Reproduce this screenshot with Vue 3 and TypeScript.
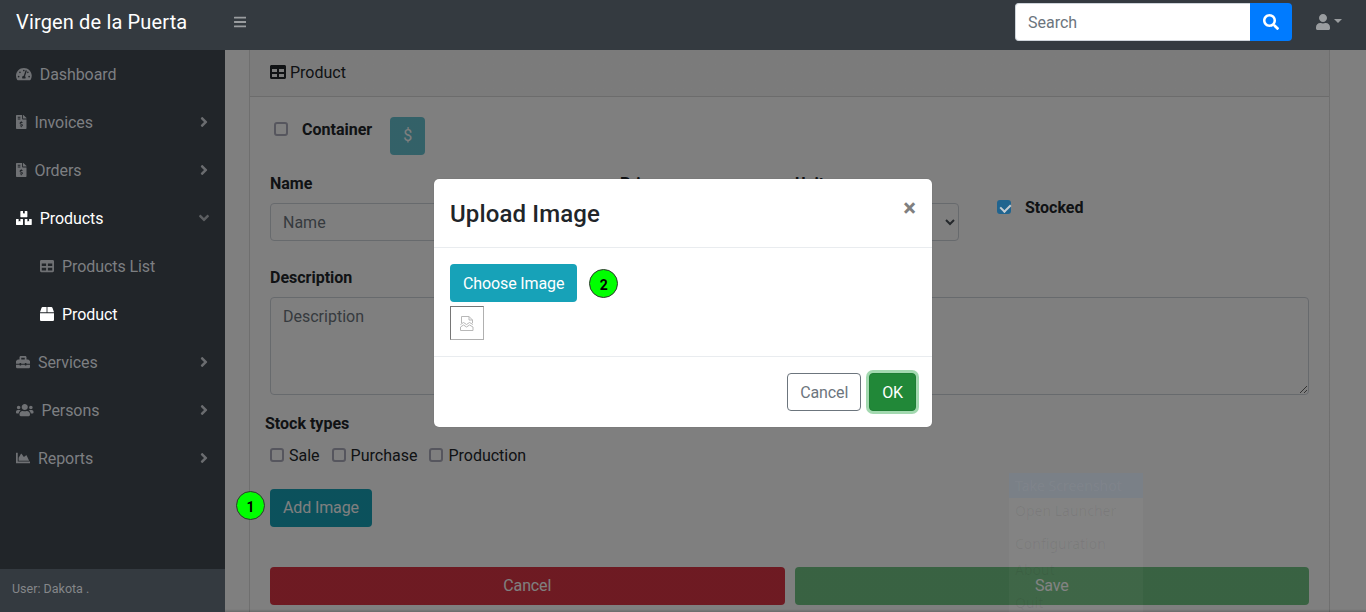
<script setup lang="ts">
interface Icon { w: number; d: string }
const ic: Record<string, Icon> = {
  gauge: { w: 576, d: 'M288 32C128.94 32 0 160.94 0 320c0 52.8 14.25 102.26 39.06 144.8 5.61 9.62 16.3 15.2 27.44 15.2h443c11.14 0 21.83-5.58 27.44-15.2C561.75 422.26 576 372.8 576 320c0-159.06-128.94-288-288-288zm0 64c14.71 0 26.58 10.13 30.32 23.65-1.11 2.26-2.64 4.23-3.45 6.67l-9.22 27.67c-5.13 3.49-10.97 6.01-17.64 6.01-17.67 0-32-14.33-32-32S270.33 96 288 96zM96 384c-17.67 0-32-14.33-32-32s14.33-32 32-32 32 14.33 32 32-14.33 32-32 32zm48-160c-17.67 0-32-14.33-32-32s14.33-32 32-32 32 14.33 32 32-14.33 32-32 32zm246.77-72.41l-61.33 184C343.13 347.33 352 364.54 352 384c0 11.72-3.38 22.55-8.88 32H232.88c-5.5-9.45-8.88-20.28-8.88-32 0-33.94 26.5-61.43 59.9-63.59l61.34-184.01c4.17-12.56 17.73-19.45 30.36-15.17 12.57 4.19 19.35 17.79 15.17 30.36zm14.66 57.2l15.52-46.55c3.47-1.29 7.13-2.23 11.05-2.23 17.67 0 32 14.33 32 32s-14.33 32-32 32c-11.38-.01-20.89-6.28-26.57-15.22zM480 384c-17.67 0-32-14.33-32-32s14.33-32 32-32 32 14.33 32 32-14.33 32-32 32z' },
  invoice: { w: 384, d: 'M377 105L279.1 7c-4.5-4.5-10.6-7-17-7H256v128h128v-6.1c0-6.3-2.5-12.4-7-16.9zm-153 31V0H24C10.7 0 0 10.7 0 24v464c0 13.3 10.7 24 24 24h336c13.3 0 24-10.7 24-24V160H248c-13.2 0-24-10.8-24-24zM64 72c0-4.42 3.58-8 8-8h80c4.42 0 8 3.58 8 8v16c0 4.42-3.58 8-8 8H72c-4.42 0-8-3.58-8-8V72zm0 80v-16c0-4.42 3.58-8 8-8h80c4.42 0 8 3.58 8 8v16c0 4.42-3.58 8-8 8H72c-4.42 0-8-3.58-8-8zm144 263.88V440c0 4.42-3.58 8-8 8h-16c-4.42 0-8-3.58-8-8v-24.29c-11.29-.58-22.27-4.52-31.37-11.35-3.9-2.93-4.1-8.77-.57-12.14l11.75-11.21c2.77-2.64 6.89-2.76 10.13-.73 3.87 2.42 8.26 3.72 12.82 3.72h28.11c6.5 0 11.8-5.92 11.8-13.19 0-5.95-3.61-11.19-8.77-12.73l-45-13.5c-18.59-5.58-31.58-23.42-31.58-43.39 0-24.52 19.05-44.44 42.67-45.07V232c0-4.42 3.58-8 8-8h16c4.42 0 8 3.58 8 8v24.29c11.29.58 22.27 4.51 31.37 11.35 3.9 2.93 4.1 8.77.57 12.14l-11.75 11.21c-2.77 2.64-6.89 2.76-10.13.73-3.87-2.43-8.26-3.72-12.82-3.72h-28.11c-6.5 0-11.8 5.92-11.8 13.19 0 5.95 3.61 11.19 8.77 12.73l45 13.5c18.59 5.58 31.58 23.42 31.58 43.39 0 24.53-19.05 44.44-42.67 45.07z' },
  boxes: { w: 576, d: 'M560 288h-80v96l-32-21.3-32 21.3v-96h-80c-8.8 0-16 7.2-16 16v192c0 8.8 7.2 16 16 16h224c8.8 0 16-7.2 16-16V304c0-8.8-7.2-16-16-16zm-384-64h224c8.8 0 16-7.2 16-16V16c0-8.8-7.2-16-16-16h-80v96l-32-21.3L256 96V0h-80c-8.8 0-16 7.2-16 16v192c0 8.8 7.2 16 16 16zm64 64h-80v96l-32-21.3L96 384v-96H16c-8.8 0-16 7.2-16 16v192c0 8.8 7.2 16 16 16h224c8.8 0 16-7.2 16-16V304c0-8.8-7.2-16-16-16z' },
  table: { w: 512, d: 'M464 32H48C21.49 32 0 53.49 0 80v352c0 26.51 21.49 48 48 48h416c26.51 0 48-21.49 48-48V80c0-26.51-21.49-48-48-48zM224 416H64v-96h160v96zm0-160H64v-96h160v96zm224 160H288v-96h160v96zm0-160H288v-96h160v96z' },
  box: { w: 512, d: 'M509.5 184.6L458.9 32.8C452.4 13.2 434.1 0 413.4 0H272v192h238.7c-.4-2.5-.4-5-1.2-7.4zM240 0H98.6c-20.7 0-39 13.2-45.5 32.8L2.5 184.6c-.8 2.4-.8 4.9-1.2 7.4H240V0zM0 224v240c0 26.5 21.5 48 48 48h416c26.5 0 48-21.5 48-48V224H0z' },
  toolbox: { w: 512, d: 'M502.63 214.63l-45.25-45.25c-6-6-14.14-9.37-22.63-9.37H384V80c0-26.51-21.49-48-48-48H176c-26.51 0-48 21.49-48 48v80H77.25c-8.49 0-16.62 3.37-22.63 9.37L9.37 214.63c-6 6-9.37 14.14-9.37 22.63V320h128v-16c0-8.84 7.16-16 16-16h32c8.84 0 16 7.16 16 16v16h128v-16c0-8.84 7.16-16 16-16h32c8.84 0 16 7.16 16 16v16h128v-82.75c0-8.48-3.37-16.62-9.37-22.62zM320 160H192V96h128v64zm64 208c0 8.84-7.16 16-16 16h-32c-8.84 0-16-7.16-16-16v-16H192v16c0 8.84-7.16 16-16 16h-32c-8.84 0-16-7.16-16-16v-16H0v96c0 17.67 14.33 32 32 32h448c17.67 0 32-14.33 32-32v-96H384v16z' },
  users: { w: 640, d: 'M96 224c35.3 0 64-28.7 64-64s-28.7-64-64-64-64 28.7-64 64 28.7 64 64 64zm448 0c35.3 0 64-28.7 64-64s-28.7-64-64-64-64 28.7-64 64 28.7 64 64 64zm32 32h-64c-17.6 0-33.5 7.1-45.1 18.6 40.3 22.1 68.9 62 75.1 109.4h66c17.7 0 32-14.3 32-32v-32c0-35.3-28.7-64-64-64zm-256 0c61.9 0 112-50.1 112-112S381.9 32 320 32 208 82.1 208 144s50.1 112 112 112zm76.8 32h-8.3c-20.8 10-43.9 16-68.5 16s-47.6-6-68.5-16h-8.3C179.6 288 128 339.6 128 403.2V432c0 26.5 21.5 48 48 48h288c26.5 0 48-21.5 48-48v-28.8c0-63.6-51.6-115.2-115.2-115.2zm-223.7-13.4C161.5 263.1 145.6 256 128 256H64c-35.3 0-64 28.7-64 64v32c0 17.7 14.3 32 32 32h65.9c6.3-47.4 34.9-87.3 75.2-109.4z' },
  chart: { w: 512, d: 'M500 384c6.6 0 12 5.4 12 12v40c0 6.6-5.4 12-12 12H12c-6.6 0-12-5.4-12-12V76c0-6.6 5.4-12 12-12h40c6.6 0 12 5.4 12 12v308h436zM372.7 159.5L288 216l-85.3-113.7c-5.1-6.8-15.5-6.3-19.9 1L96 248v104h384l-89.9-187.8c-3.2-6.5-11.4-8.7-17.4-4.7z' },
  right: { w: 256, d: 'M224.3 273l-136 136c-9.4 9.4-24.6 9.4-33.9 0l-22.6-22.6c-9.4-9.4-9.4-24.6 0-33.9l96.4-96.4-96.4-96.4c-9.4-9.4-9.4-24.6 0-33.9L54.3 103c9.4-9.4 24.6-9.4 33.9 0l136 136c9.5 9.4 9.5 24.6.1 34z' },
  down: { w: 320, d: 'M143 352.3L7 216.3c-9.4-9.4-9.4-24.6 0-33.9l22.6-22.6c9.4-9.4 24.6-9.4 33.9 0l96.4 96.4 96.4-96.4c9.4-9.4 24.6-9.4 33.9 0l22.6 22.6c9.4 9.4 9.4 24.6 0 33.9l-136 136c-9.2 9.4-24.4 9.4-33.8 0z' },
  bars: { w: 448, d: 'M16 132h416c8.837 0 16-7.163 16-16V76c0-8.837-7.163-16-16-16H16C7.163 60 0 67.163 0 76v40c0 8.837 7.163 16 16 16zm0 160h416c8.837 0 16-7.163 16-16v-40c0-8.837-7.163-16-16-16H16c-8.837 0-16 7.163-16 16v40c0 8.837 7.163 16 16 16zm0 160h416c8.837 0 16-7.163 16-16v-40c0-8.837-7.163-16-16-16H16c-8.837 0-16 7.163-16 16v40c0 8.837 7.163 16 16 16z' },
  search: { w: 512, d: 'M505 442.7L405.3 343c-4.5-4.5-10.6-7-17-7H372c27.6-35.3 44-79.7 44-128C416 93.1 322.9 0 208 0S0 93.1 0 208s93.1 208 208 208c48.3 0 92.7-16.4 128-44v16.3c0 6.4 2.5 12.5 7 17l99.7 99.7c9.4 9.4 24.6 9.4 33.9 0l28.3-28.3c9.4-9.4 9.4-24.6.1-34zM208 336c-70.7 0-128-57.2-128-128 0-70.7 57.2-128 128-128 70.7 0 128 57.2 128 128 0 70.7-57.2 128-128 128z' },
  user: { w: 448, d: 'M224 256c70.7 0 128-57.3 128-128S294.7 0 224 0 96 57.3 96 128s57.3 128 128 128zm89.6 32h-16.7c-22.2 10.2-46.9 16-72.9 16s-50.6-5.8-72.9-16h-16.7C60.2 288 0 348.2 0 422.4V464c0 26.5 21.5 48 48 48h352c26.5 0 48-21.5 48-48v-41.6c0-74.2-60.2-134.4-134.4-134.4z' },
}
const vb = (k: string): string => `0 0 ${ic[k].w} 512`

interface NavItem { label: string; icon: string; arrow?: 'right' | 'down'; active?: boolean; sub?: boolean }
const nav: NavItem[] = [
  { label: 'Dashboard', icon: 'gauge' },
  { label: 'Invoices', icon: 'invoice', arrow: 'right' },
  { label: 'Orders', icon: 'invoice', arrow: 'right' },
  { label: 'Products', icon: 'boxes', arrow: 'down', active: true },
  { label: 'Products List', icon: 'table', sub: true },
  { label: 'Product', icon: 'box', sub: true, active: true },
  { label: 'Services', icon: 'toolbox', arrow: 'right' },
  { label: 'Persons', icon: 'users', arrow: 'right' },
  { label: 'Reports', icon: 'chart', arrow: 'right' },
]
const stockTypes: string[] = ['Sale', 'Purchase', 'Production']
interface TrayItem { label: string; sep?: boolean }
const trayMenu: TrayItem[] = [
  { label: 'Open Launcher' },
  { label: 'Configuration', sep: true },
  { label: 'About' },
  { label: 'Quit', sep: true },
]
</script>

<template>
  <div class="app">
    <header class="topbar">
      <div class="brand">Virgen de la Puerta</div>
      <svg class="bars" :viewBox="vb('bars')"><path :d="ic.bars.d" /></svg>
      <div class="search">
        <input class="search-input" type="text" placeholder="Search" />
        <button class="search-btn" type="button">
          <svg class="search-ic" :viewBox="vb('search')"><path :d="ic.search.d" /></svg>
        </button>
      </div>
      <div class="user">
        <svg class="user-ic" :viewBox="vb('user')"><path :d="ic.user.d" /></svg>
        <span class="caret"></span>
      </div>
    </header>

    <div class="below">
      <aside class="sidebar">
        <nav class="nav">
          <a
            v-for="item in nav"
            :key="item.label"
            class="nav-item"
            :class="{ active: item.active, sub: item.sub }"
          >
            <svg class="nav-ic" :viewBox="vb(item.icon)"><path :d="ic[item.icon].d" /></svg>
            <span class="nav-label">{{ item.label }}</span>
            <svg v-if="item.arrow" class="nav-arrow" :class="item.arrow" :viewBox="vb(item.arrow)"><path :d="ic[item.arrow].d" /></svg>
          </a>
        </nav>
        <footer class="side-foot">User: Dakota .</footer>
      </aside>

      <main class="content">
        <section class="card">
          <div class="card-head">
            <svg class="head-ic" :viewBox="vb('table')"><path :d="ic.table.d" /></svg>
            <span class="tx">Product</span>
          </div>
          <div class="card-body">
            <div class="container-row">
              <input class="check" type="checkbox" />
              <span class="strong">Container</span>
              <button class="btn btn-info price-btn" type="button" disabled>$</button>
            </div>

            <div class="fields">
              <label class="field f-name"><span class="strong">Name</span><input class="ctl" placeholder="Name" /></label>
              <label class="field f-price"><span class="strong">Price</span><input class="ctl" placeholder="Price" /></label>
              <label class="field f-unit"><span class="strong">Unit</span><select class="ctl"><option>Unit</option></select></label>
              <label class="stocked"><input class="check checked" type="checkbox" checked /><span class="strong">Stocked</span></label>
            </div>

            <label class="field desc"><span class="strong">Description</span><textarea class="ctl area" placeholder="Description"></textarea></label>

            <div class="strong stock-title">Stock types</div>
            <div class="stock-row">
              <label v-for="s in stockTypes" :key="s" class="stock-opt"><input class="check" type="checkbox" /><span class="tx">{{ s }}</span></label>
            </div>

            <div class="add-row">
              <button class="btn btn-info" type="button">Add Image</button>
              <span class="step step-1">1</span>
            </div>

            <div class="actions">
              <button class="btn btn-danger" type="button">Cancel</button>
              <button class="btn btn-success" type="button" disabled>Save</button>
            </div>
          </div>
        </section>

        <div class="backdrop">
          <div class="modal">
            <div class="modal-head">
              <h5 class="modal-title">Upload Image</h5>
              <span class="close">×</span>
            </div>
            <div class="modal-body">
              <div class="choose-row">
                <button class="btn btn-info low" type="button">Choose Image</button>
                <span class="step">2</span>
              </div>
              <div class="broken">
                <svg class="broken-ic" width="14" height="15" viewBox="0 0 14 15">
                  <path d="M1.500 7V.5h7.500l3.500 3.500V7M9 .5V4h3.500" />
                  <path d="M.5 8.500l3-2 3 2 3-2 3.500 2M.5 11l3-2 3 2 3-2 3.500 2v3.500H.5z" />
                </svg>
              </div>
            </div>
            <div class="modal-foot">
              <button class="btn btn-outline low" type="button">Cancel</button>
              <button class="btn btn-ok low" type="button">OK</button>
            </div>
          </div>
        </div>

        <div class="tray" aria-hidden="true">
          <div class="tray-head">Take Screenshot</div>
          <div v-for="t in trayMenu" :key="t.label" class="tray-item" :class="{ sep: t.sep }">{{ t.label }}</div>
        </div>
      </main>
    </div>
  </div>
</template>

<style>
html, body { margin: 0; padding: 0; overflow: hidden; }
</style>

<style scoped>
* { box-sizing: border-box; }
svg { display: block; fill: currentColor; flex: none; }
.app { width: 1366px; height: 612px; display: flex; flex-direction: column; overflow: hidden; font-family: Roboto, "Liberation Sans", sans-serif; font-size: 16px; line-height: 24px; color: #212529; background: #fff; }

.topbar { height: 50px; flex: none; display: flex; align-items: center; background: #343a40; padding-bottom: 6px; }
.brand { width: 225px; padding-left: 16px; color: #fff; font-size: 20px; letter-spacing: .15px; }
.bars { height: 14px; margin-left: 9px; color: #9a9da0; }
.search { margin-left: auto; display: flex; height: 38px; }
.search-input { width: 235px; height: 38px; border: 1px solid #ced4da; border-right: 0; border-radius: 4px 0 0 4px; padding: 6px 12px; font: inherit; outline: 0; background: #fff; }
.search-input::placeholder { color: #6c757d; }
.search-btn { width: 42px; height: 38px; border: 0; padding: 0; background: #007bff; color: #fff; border-radius: 0 4px 4px 0; display: flex; align-items: center; justify-content: center; }
.search-ic { height: 16px; }
.user { width: 74px; padding-left: 24px; display: flex; align-items: center; color: #9a9da0; gap: 4px; }
.user-ic { height: 16px; }
.caret { width: 0; height: 0; border-style: solid; border-width: 4.8px 4.8px 0; border-color: #9a9da0 transparent transparent; margin-top: -2px; }

.below { flex: 1; min-height: 0; display: flex; }

.sidebar { width: 225px; flex: none; background: #212529; display: flex; flex-direction: column; }
.nav { flex: 1; }
.nav-item { height: 48px; padding: 0 16px; display: flex; align-items: center; gap: 8px; color: #7d7f82; }
.nav-item.active { color: #fff; }
.nav-item.sub { padding-left: 40px; }
.nav-ic { height: 14px; }
.nav-item:not(.active) .nav-ic { color: #6f7174; }
.nav-label { display: block; height: 24px; padding-top: 1px; letter-spacing: -.08px; }
.nav-arrow { height: 16px; margin-left: auto; color: #6a6c6f; }
.nav-arrow.right { margin-right: 1px; }
.nav-arrow.down { color: #5c5e61; }
.side-foot { height: 43px; flex: none; background: #343a40; color: #85878a; font-size: 12.500px; display: flex; align-items: center; padding: 0 0 3px 12px; }

.content { flex: 1; min-width: 0; position: relative; padding: 0 36px 0 24px; overflow: hidden; }
.card { border: 1px solid rgba(0,0,0,.125); border-top: 0; border-bottom: 0; height: 100%; }
.card-head { height: 47px; padding: 0 20px 2px; display: flex; align-items: center; gap: 4px; background: rgba(0,0,0,.03); border-bottom: 1px solid rgba(0,0,0,.125); }
.head-ic { height: 16px; }
.tx { display: block; height: 24px; padding-top: 1px; }
.card-body { padding: 20px 20px 0; }
.strong { display: block; height: 24px; padding-top: 1px; font-weight: 700; }
.check { appearance: none; width: 14px; height: 14px; margin: 0; flex: none; border: 2px solid #acacbc; border-radius: 3px; background: transparent; }
.check.checked { position: relative; z-index: 2; background: #20648f; border-color: #20648f; }
.check.checked::after { content: ""; position: absolute; left: 2.500px; top: -.5px; width: 5px; height: 8px; border: solid #c4ccd2; border-width: 0 2px 2px 0; transform: rotate(45deg); }

.container-row { display: flex; align-items: flex-start; height: 38px; margin-bottom: 16px; padding-left: 4px; }
.container-row .check { margin-top: 5px; margin-right: 14px; }
.price-btn { margin-left: 18px; width: 35px; font-size: 18px; font-weight: 100; }

.fields { display: flex; align-items: flex-start; margin-bottom: 24px; }
.field { display: flex; flex-direction: column; gap: 8px; }
.f-name { width: 335px; margin-right: 15px; }
.f-price { width: 160px; margin-right: 15px; }
.f-unit { width: 164px; margin-right: 38px; }
.ctl { height: 38px; border: 1px solid #ced4da; border-radius: 4px; padding: 6px 12px; font: inherit; color: #495057; background: #fff; outline: 0; width: 100%; }
.ctl::placeholder { color: #6c757d; }
.stocked { display: flex; align-items: center; gap: 14px; margin-top: 24px; }
.desc { margin-bottom: 16px; }
.area { height: 98px; display: block; padding-top: 7px; }

.stock-title { margin-left: -5px; margin-bottom: 8px; }
.stock-row { display: flex; gap: 12px; }
.stock-opt { display: flex; align-items: center; gap: 5px; }

.add-row { position: relative; margin-top: 22px; height: 38px; }
.step { width: 29px; height: 29px; border-radius: 50%; background: #0f0; border: 1px solid #333; color: #000; font-weight: 700; font-size: 14px; padding-top: 2px; display: inline-flex; align-items: center; justify-content: center; }
.step-1 { position: absolute; left: -34px; top: 2px; z-index: 2; }

.actions { margin-top: 40px; display: flex; gap: 10px; }
.actions .btn { flex: 1; }

.btn { height: 38px; border: 1px solid transparent; border-radius: 4px; padding: 0 12px; font: inherit; color: #fff; white-space: nowrap; letter-spacing: -.12px; }
.btn.low { padding-top: 2px; }
.btn-info { background: #17a2b8; }
.btn-danger { background: #dc3545; }
.btn-success { background: #28a745; }
.btn:disabled { opacity: .65; }

.backdrop { position: absolute; inset: 0; z-index: 1; background: linear-gradient(rgba(0,0,0,.5) calc(100% - 3px), rgba(0,0,0,.58)); }
.modal { position: absolute; left: 209px; top: 129px; width: 498px; height: 248px; background: #fff; border-radius: 5px; display: flex; flex-direction: column; box-shadow: 0 0 1px rgba(0,0,0,.3); }
.modal-head { height: 69px; flex: none; padding: 0 16px; display: flex; justify-content: space-between; align-items: flex-start; border-bottom: 1px solid #e9ecef; }
.modal-title { margin: 0; font-size: 24px; font-weight: 500; line-height: 70px; letter-spacing: .13px; }
.close { font-size: 24px; font-weight: 700; color: #7f7f7f; line-height: 58px; }
.modal-body { flex: 1; padding: 16px; display: flex; flex-direction: column; gap: 4px; border-bottom: 1px solid #e9ecef; }
.choose-row { display: flex; align-items: center; gap: 12px; }
.choose-row .step { margin-top: 1px; }
.broken { width: 34px; height: 34px; border: 1px solid; border-color: #767676 #b0b0b0 #b0b0b0 #767676; display: flex; align-items: center; justify-content: center; }
.broken-ic { fill: none; stroke: #b8b8b8; stroke-width: 1; }
.modal-foot { height: 70px; flex: none; display: flex; justify-content: flex-end; align-items: center; gap: 8px; padding: 0 16px; }
.btn-outline { background: #fff; border-color: #6c757d; color: #6c757d; }
.btn-ok { background: #218838; border-color: #1e7e34; box-shadow: 0 0 0 3px rgba(72,180,97,.5); }

.tray { position: absolute; left: 784px; top: 423px; z-index: 3; width: 134px; height: 139px; background: rgba(255,255,255,.03); pointer-events: none; font-family: "Noto Sans", sans-serif; font-size: 14px; color: rgba(0,0,0,.06); }
.tray-head { height: 25px; padding-left: 6px; line-height: 25px; background: rgba(20,100,200,.07); color: rgba(255,255,255,.05); }
.tray-item { height: 26px; padding-left: 6px; line-height: 26px; }
.tray-item.sep { margin-top: 7px; }
</style>
